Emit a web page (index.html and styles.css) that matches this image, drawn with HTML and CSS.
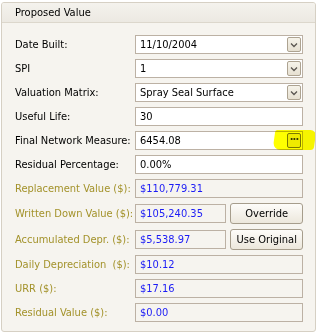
FILE: index.html
```html
<!DOCTYPE html>
<html>
<head>
<meta charset="utf-8">
<link rel="stylesheet" href="styles.css">
</head>
<body>
<div class="panel">
  <div class="panel-head">Proposed Value</div>
  <div class="form">
    <div class="label">Date Built:</div>
    <div class="field edit combo"><span>11/10/2004</span><span class="drop"><svg width="8" height="6" viewBox="0 0 8 6"><path d="M1 1.5 L4 4.5 L7 1.5" fill="none" stroke="#5a5650" stroke-width="1.3"/></svg></span></div>

    <div class="label">SPI</div>
    <div class="field edit combo"><span>1</span><span class="drop"><svg width="8" height="6" viewBox="0 0 8 6"><path d="M1 1.5 L4 4.5 L7 1.5" fill="none" stroke="#5a5650" stroke-width="1.3"/></svg></span></div>

    <div class="label">Valuation Matrix:</div>
    <div class="field edit combo"><span>Spray Seal Surface</span><span class="drop"><svg width="8" height="6" viewBox="0 0 8 6"><path d="M1 1.5 L4 4.5 L7 1.5" fill="none" stroke="#5a5650" stroke-width="1.3"/></svg></span></div>

    <div class="label">Useful Life:</div>
    <div class="field edit"><span>30</span></div>

    <div class="label">Final Network Measure:</div>
    <div class="field edit combo hl-wrap"><span>6454.08</span><span class="drop dots">&middot;&middot;&middot;</span><span class="highlight"></span></div>

    <div class="label">Residual Percentage:</div>
    <div class="field edit"><span>0.00%</span></div>

    <div class="label ro">Replacement Value ($):</div>
    <div class="field val"><span>$110,779.31</span></div>

    <div class="label ro">Written Down Value ($):</div>
    <div class="pair">
      <div class="field val"><span>$105,240.35</span></div>
      <button class="btn">Override</button>
    </div>

    <div class="label ro">Accumulated Depr. ($):</div>
    <div class="pair">
      <div class="field val"><span>$5,538.97</span></div>
      <button class="btn">Use Original</button>
    </div>

    <div class="label ro">Daily Depreciation&nbsp; ($):</div>
    <div class="field val"><span>$10.12</span></div>

    <div class="label ro">URR ($):</div>
    <div class="field val"><span>$17.16</span></div>

    <div class="label ro">Residual Value ($):</div>
    <div class="field val"><span>$0.00</span></div>
  </div>
</div>
</body>
</html>
```

FILE: styles.css
```css
html, body {
  margin: 0;
  padding: 0;
  background: #ffffff;
}
body {
  font-family: "DejaVu Sans Condensed", "DejaVu Sans", sans-serif;
  font-size: 11px;
  color: #000;
}
.panel {
  margin: 2px 0 0 1px;
  width: 315px;
  height: 330px;
  box-sizing: border-box;
  border: 1px solid #d6d0c4;
  border-radius: 3px;
  background: #f6f4ef;
  overflow: hidden;
}
.panel-head {
  height: 19px;
  line-height: 19px;
  padding-left: 13px;
  background: linear-gradient(#f4f2ed, #ece9e2);
  border-bottom: 1px solid #dcd7cc;
}
.form {
  display: grid;
  grid-template-columns: 120px 168px;
  row-gap: 5px;
  padding: 12px 0 0 13px;
  align-items: center;
}
.label {
  white-space: nowrap;
}
.label.ro {
  color: #a3922a;
}
.field {
  height: 19px;
  box-sizing: border-box;
  border: 1px solid #bcb1a4;
  display: flex;
  align-items: center;
  padding-left: 4px;
  position: relative;
}
.field.edit {
  background: #ffffff;
}
.field.val {
  background: #f6f4ef;
  color: #1c1cf5;
}
.field span:first-child {
  flex: 1;
}
.drop {
  width: 14px;
  height: 15px;
  box-sizing: border-box;
  margin-right: 1px;
  border: 1px solid #ada391;
  border-radius: 2px;
  background: linear-gradient(#f6f3ea, #e6e0d1);
  display: flex;
  align-items: center;
  justify-content: center;
  position: relative;
  z-index: 1;
}
.dots {
  font-size: 11px;
  font-weight: bold;
  line-height: 1;
  color: #3a3a10;
  border-color: #7c7a3a;
  background: #efeab8;
  padding-bottom: 2px;
  letter-spacing: -1px;
}
.highlight {
  position: absolute;
  left: 138px;
  top: -2px;
  width: 41px;
  height: 20px;
  background: #ffff00;
  mix-blend-mode: multiply;
  border-radius: 2px 6px 3px 8px;
  transform: skewX(-8deg);
  z-index: 2;
}
.pair {
  display: flex;
  gap: 4px;
  align-items: center;
}
.pair .field {
  width: 92px;
}
.btn {
  width: 73px;
  height: 21px;
  box-sizing: border-box;
  border: 1px solid #a69d8c;
  border-radius: 3px;
  background: linear-gradient(#fdfcf9, #ece7dc);
  font-family: inherit;
  font-size: 11px;
  color: #000;
  padding: 0;
}
```
